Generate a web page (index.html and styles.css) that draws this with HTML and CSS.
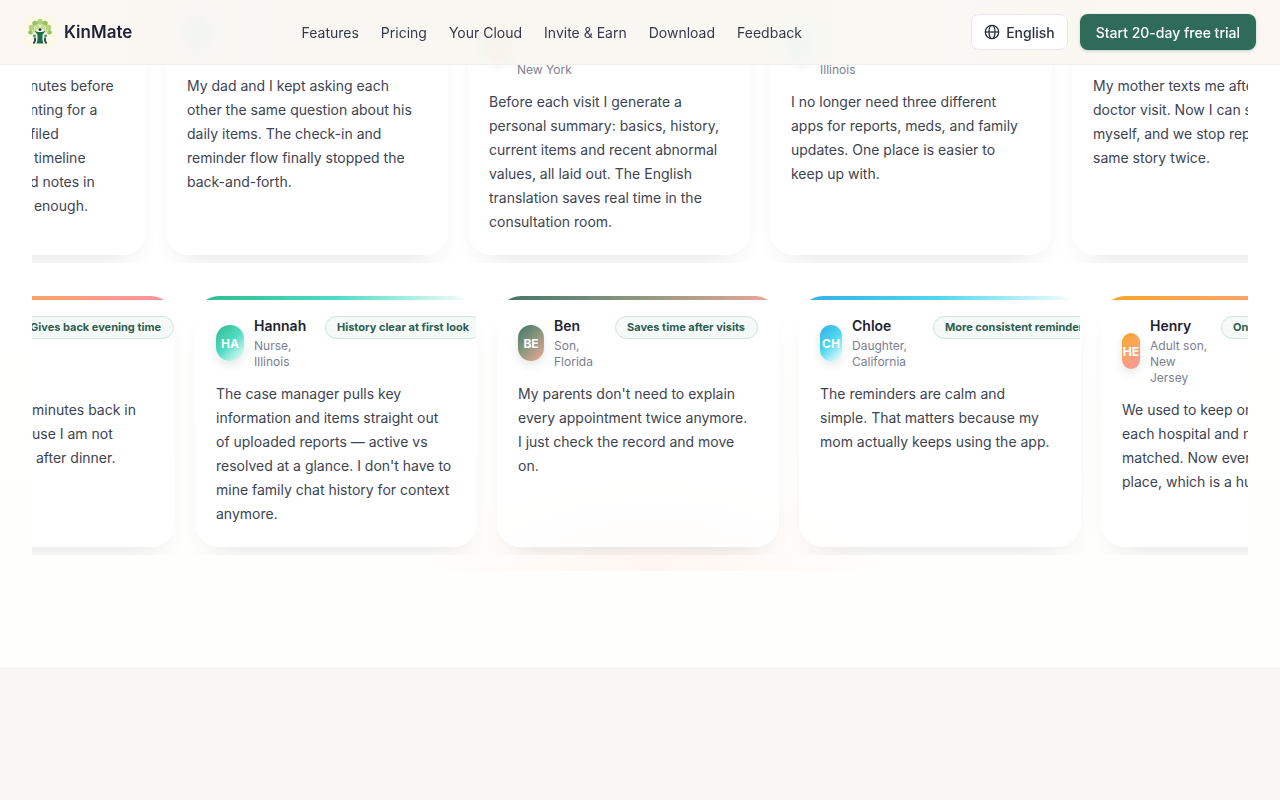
FILE: index.html
```html
<!DOCTYPE html>
<html lang="en">
  <head>
    <meta charset="UTF-8" />
    <meta name="viewport" content="width=device-width, initial-scale=1.0" />
    <title>KinMate</title>
    <link rel="stylesheet" href="styles.css">
  </head>
  <body>
    <header class="header">
      <a href="#" class="brand">
        <svg class="brand-logo" viewBox="0 0 32 32" aria-hidden="true">
          <rect width="32" height="32" rx="8" fill="#faf9e6" />
          <g fill="#b2d07c">
            <circle cx="16" cy="6" r="2.900" />
            <circle cx="11" cy="7.500" r="2.700" fill="#9bc163" />
            <circle cx="21" cy="7.500" r="2.700" fill="#9bc163" />
            <circle cx="7.500" cy="11.500" r="2.700" />
            <circle cx="24.500" cy="11.500" r="2.700" />
            <circle cx="6.500" cy="16.200" r="2.300" fill="#9bc163" />
            <circle cx="25.500" cy="16.200" r="2.300" fill="#9bc163" />
            <circle cx="13" cy="11" r="2.500" fill="#c8de95" />
            <circle cx="19" cy="11" r="2.500" fill="#c8de95" />
            <circle cx="10.500" cy="14.500" r="2.100" fill="#c8de95" />
            <circle cx="21.500" cy="14.500" r="2.100" fill="#c8de95" />
          </g>
          <circle cx="16" cy="13.400" r="1.500" fill="#20445a" />
          <path d="M10.500 14.500q2 3.500 3 4.200v5.300q-.2 2-1.200 3.500h7.400q-1-1.500-1.200-3.500v-5.300q1-.7 3-4.200-2.500 2-5.500 1.500-3 .5-5.500-1.500z" fill="#1f6a48" />
          <circle cx="10.500" cy="19.800" r="1.300" fill="#2f8a55" />
          <circle cx="21.500" cy="19.800" r="1.300" fill="#2f8a55" />
          <path d="M11 21.500v3.500l-1.500 2.500M21 21.500v3.500l1.500 2.500" stroke="#20445a" stroke-width="1.800" fill="none" />
        </svg>
        <span>KinMate</span>
      </a>
      <nav class="nav">
        <a href="#">Features</a>
        <a href="#">Pricing</a>
        <a href="#">Your Cloud</a>
        <a href="#">Invite &amp; Earn</a>
        <a href="#">Download</a>
        <a href="#">Feedback</a>
      </nav>
      <div class="actions">
        <button type="button" class="btn btn-lang">
          <svg viewBox="0 0 16 16" aria-hidden="true">
            <circle cx="8" cy="8" r="6.700" />
            <ellipse cx="8" cy="8" rx="3" ry="6.700" />
            <path d="M1.300 8h13.400" />
          </svg>
          English
        </button>
        <button type="button" class="btn btn-trial">Start 20-day free trial</button>
      </div>
    </header>

    <main class="stories">
      <div class="wall">
        <!-- first row, partly under the header -->
        <div class="row">
          <div class="track track-1">
            <article class="card mint cut">
              <div class="head"></div>
              <p class="text">nutes before
nting for a
filed
 timeline
d notes in
 enough.</p>
            </article>
            <article class="card sky">
              <div class="head"><div class="avatar"></div></div>
              <p class="text">My dad and I kept asking each other the same question about his daily items. The check-in and reminder flow finally stopped the back-and-forth.</p>
            </article>
            <article class="card sunset">
              <div class="head tall">
                <div class="avatar"></div>
                <div class="who"><span>New York</span></div>
              </div>
              <p class="text">Before each visit I generate a personal summary: basics, history, current items and recent abnormal values, all laid out. The English translation saves real time in the consultation room.</p>
            </article>
            <article class="card mint slim">
              <div class="head tall">
                <div class="avatar"></div>
                <div class="who"><span>Illinois</span></div>
              </div>
              <p class="text">I no longer need three different apps for reports, meds, and family updates. One place is easier to keep up with.</p>
            </article>
            <article class="card earth">
              <div class="head"></div>
              <p class="text">My mother texts me after every doctor visit. Now I can see it<br>myself, and we stop repeating the same story twice.</p>
            </article>
          </div>
        </div>

        <!-- second row -->
        <div class="row">
          <div class="track track-2">
            <article class="card sunset cut">
              <div class="head tall"><span class="tag">Gives back evening time</span></div>
              <p class="text">minutes back in
use I am not
 after dinner.</p>
            </article>
            <article class="card mint">
              <div class="head">
                <div class="avatar">HA</div>
                <div class="who"><h3>Hannah</h3><span>Nurse, Illinois</span></div>
                <span class="tag">History clear at first look</span>
              </div>
              <p class="text">The case manager pulls key information and items straight out<br>of uploaded reports — active vs resolved at a glance. I don't have to mine family chat history for context anymore.</p>
            </article>
            <article class="card earth">
              <div class="head">
                <div class="avatar">BE</div>
                <div class="who"><h3>Ben</h3><span>Son, Florida</span></div>
                <span class="tag">Saves time after visits</span>
              </div>
              <p class="text">My parents don't need to explain every appointment twice anymore.<br>I just check the record and move<br>on.</p>
            </article>
            <article class="card sky">
              <div class="head">
                <div class="avatar">CH</div>
                <div class="who"><h3>Chloe</h3><span>Daughter, California</span></div>
                <span class="tag">More consistent reminders</span>
              </div>
              <p class="text">The reminders are calm and<br>simple. That matters because my mom actually keeps using the app.</p>
            </article>
            <article class="card sunset">
              <div class="head tall">
                <div class="avatar">HE</div>
                <div class="who"><h3>Henry</h3><span>Adult son, New<br>Jersey</span></div>
                <span class="tag">One place for records</span>
              </div>
              <p class="text">We used to keep one folder for each hospital and nothing ever matched. Now everything is in one place, which is a huge relief.</p>
            </article>
          </div>
        </div>
      </div>
    </main>
  </body>
</html>
```

FILE: styles.css
```css
* {
  margin: 0;
  padding: 0;
  box-sizing: border-box;
}

body {
  min-height: 100vh;
  background-color: #f8f7f3;
  color: #1f2937;
  font-family: Inter, "Liberation Sans", sans-serif;
  font-size: 14px;
  overflow-x: hidden;
}

/* header */
.header {
  position: fixed;
  top: 0;
  left: 0;
  right: 0;
  z-index: 10;
  display: flex;
  justify-content: space-between;
  align-items: center;
  height: 65px;
  padding: 0 24px;
  border-bottom: 1px solid #f1f0ed;
  background: linear-gradient(90deg, rgba(252, 246, 242, 0.92), rgba(247, 246, 241, 0.92) 25%, rgba(248, 247, 242, 0.92) 70%, rgba(252, 246, 242, 0.92));
  backdrop-filter: blur(12px);
}

.brand {
  display: flex;
  align-items: center;
  gap: 8px;
  color: #1e2333;
  font-size: 17px;
  font-weight: 600;
  text-decoration: none;
}

.brand-logo {
  width: 32px;
  height: 32px;
}

.nav {
  display: flex;
  gap: 22px;
}

.nav a {
  color: #343a48;
  font-size: 14px;
  text-decoration: none;
}

.actions {
  display: flex;
  gap: 12px;
}

.btn {
  display: flex;
  align-items: center;
  gap: 6px;
  height: 36px;
  border: 1px solid #e8e7ec;
  border-radius: 8px;
  font-family: inherit;
  font-size: 14px;
  font-weight: 500;
  cursor: pointer;
}

.btn-lang {
  padding: 0 12px;
  background-color: #fff;
  color: #2b3145;
}

.btn-lang svg {
  width: 16px;
  height: 16px;
  fill: none;
  stroke: #2b3145;
  stroke-width: 1.3;
}

.btn-trial {
  padding: 0 16px;
  border: none;
  background-color: #2f6b5b;
  box-shadow: 0 1px 3px rgba(47, 107, 91, 0.3);
  color: #fff;
}

/* testimonials */
.stories {
  margin-top: -21px;
  padding: 0 32px 96px;
  background: linear-gradient(#fff 40%, #fefefc);
}

.wall {
  display: flex;
  flex-direction: column;
  gap: 24px;
  padding-bottom: 16px;
  background: radial-gradient(230px 100px at 51% 100%, rgba(255, 225, 210, 0.3), rgba(255, 240, 225, 0));
}

.row {
  overflow: hidden;
  padding: 8px 0;
}

.track {
  display: flex;
  gap: 20px;
}

.track-1 {
  margin-left: -168px;
}

.track-2 {
  margin-left: -139px;
}

.card {
  --avatar: 28px;
  --who: 61px;
  position: relative;
  flex: 0 0 282px;
  overflow: hidden;
  padding: 20px;
  border: 1px solid rgba(255, 255, 255, 0.8);
  border-radius: 24px;
  background-color: rgba(255, 255, 255, 0.8);
  box-shadow: 0 16px 30px -18px rgba(30, 30, 40, 0.16);
}

/* coloured strip along the top edge */
.card::before {
  content: "";
  position: absolute;
  top: 0;
  left: 0;
  right: 0;
  height: 4px;
  background: var(--paint);
}

.mint {
  --paint: linear-gradient(135deg, #2fb98c, #4fdcc4 50%, #fff);
}

.earth {
  --avatar: 26px;
  --who: 51px;
  --paint: linear-gradient(135deg, #3f7468, #8e9780 50%, #f0a898);
}

.sky {
  --avatar: 22px;
  --who: 71px;
  --paint: linear-gradient(135deg, #30afe6, #50d8f0 50%, #fff);
}

.sunset {
  --avatar: 18px;
  --paint: linear-gradient(135deg, #f5a623, #fba46a 50%, #fb93a5);
}

.slim {
  --avatar: 19px;
}

.head {
  display: grid;
  grid-template-columns: var(--avatar) var(--who) max-content;
  gap: 10px;
  height: 54px;
  margin-bottom: 12px;
}

.head.tall {
  height: 70px;
}

.avatar {
  display: flex;
  align-items: center;
  justify-content: center;
  align-self: center;
  height: 36px;
  border-radius: 14px;
  background: var(--paint);
  box-shadow: 0 4px 10px rgba(30, 60, 60, 0.12);
  color: #fff;
  font-size: 12px;
  font-weight: 700;
  overflow: hidden;
}

.who {
  align-self: end;
  color: #7b8090;
  font-size: 12px;
  line-height: 16px;
}

.who h3 {
  margin-bottom: 2px;
  color: #1e2333;
  font-size: 14px;
  font-weight: 600;
  line-height: 20px;
}

.tag {
  align-self: start;
  padding: 0 12px 0 11px;
  border: 1px solid #cfe3db;
  border-radius: 12px;
  background-color: #f3faf7;
  color: #2f5d50;
  font-size: 11px;
  font-weight: 700;
  line-height: 21px;
  white-space: nowrap;
}

.text {
  color: #3d4451;
  font-size: 14px;
  line-height: 24px;
}

/* card that has already scrolled past the left edge */
.cut .head {
  display: flex;
  justify-content: flex-end;
}

.cut .tag {
  margin-right: -20px;
}

.track-1 .cut .text {
  padding-left: 145px;
  white-space: pre;
}

.track-2 .cut .text {
  padding-left: 118px;
  white-space: pre;
}
```
